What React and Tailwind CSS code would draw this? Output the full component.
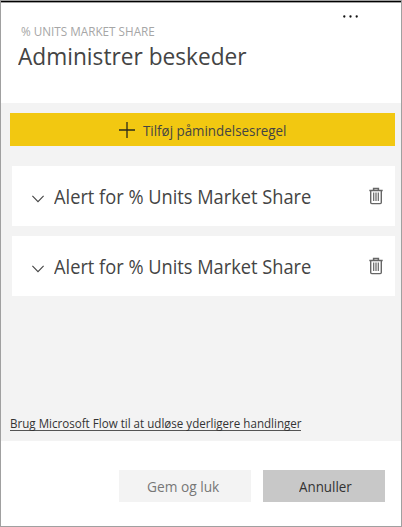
import React from "react";

function Trash() {
  return (
    <svg width="14" height="18" viewBox="0 0 14 18" fill="none" stroke="#666" className="block">
      <path d="M0.3 3.5H13.7M4.6 3.5V1.5H9.4V3.5" strokeWidth="1.5" />
      <path d="M1.7 3.5V15.5Q1.7 16.6 2.8 16.6H11.2Q12.3 16.6 12.3 15.5V3.5" strokeWidth="1.4" />
      <path d="M4.7 5.5V14M7 5.5V14M9.3 5.5V14" strokeWidth="1.2" />
    </svg>
  );
}

function AlertRow() {
  return (
    <div className="flex h-[60px] items-center bg-white pl-5 pr-3">
      <svg width="12" height="8" viewBox="0 0 12 8" fill="none" stroke="#444" strokeWidth="1.1" className="mt-1.5 block">
        <path d="M0.4 0.9L6 6.6L11.6 0.9" />
      </svg>
      <span className="ml-[10px] mt-0.5 w-[258px] origin-left scale-x-[0.912] whitespace-nowrap text-[20px] leading-7 text-[#444]">
        Alert for % Units Market Share
      </span>
      <span className="ml-auto">
        <Trash />
      </span>
    </div>
  );
}

export default function App() {
  return (
    <div className="flex h-[527px] w-[402px] flex-col overflow-hidden border border-t-0 border-[#a0a0a0] bg-white font-['Open_Sans','Noto_Sans',sans-serif]">
      <div className="h-[3px] shrink-0 border-b border-t border-[#a0a0a0] bg-black" />
      <header className="h-[100px] shrink-0 pl-[17px]">
        <div className="flex h-5 justify-end pr-[43px] pt-3">
          <svg width="15" height="3" viewBox="0 0 15 3" fill="#111">
            <circle cx="1.3" cy="1.5" r="1.15" />
            <circle cx="7.5" cy="1.5" r="1.15" />
            <circle cx="13.7" cy="1.5" r="1.15" />
          </svg>
        </div>
        <div className="ml-[3px] w-[135px] origin-left scale-x-[0.937] whitespace-nowrap pt-px text-[12.5px] leading-4 text-[#a6a6a6]">
          % UNITS MARKET SHARE
        </div>
        <h1 className="-mt-1 w-[229px] origin-left scale-x-[0.945] whitespace-nowrap pt-0.5 text-[24px] leading-9 text-[#444]">Administrer beskeder</h1>
      </header>
      <main className="flex h-[338px] shrink-0 flex-col bg-[#f3f3f3] pl-[9px] pr-[6px] pt-[10px]">
        <button className="flex h-[33px] items-center bg-[#f2c811] pl-[109px]">
          <svg width="16" height="16" viewBox="0 0 16 16" stroke="#2a2a1a" strokeWidth="1.3">
            <path d="M0 8H16M8 0V16" />
          </svg>
          <span className="ml-2 mt-0.5 w-[143px] origin-left scale-x-[0.955] whitespace-nowrap text-left text-[14px] leading-5 text-[#444]">
            Tilføj påmindelsesregel
          </span>
        </button>
        <div className="ml-0.5 mt-5 flex flex-col gap-[10px]">
          <AlertRow />
          <AlertRow />
        </div>
        <div className="mb-[10px] mt-auto h-[16px] w-[291px] border-b border-[#555]">
          <a className="block origin-left scale-x-[0.927] whitespace-nowrap pt-px text-[12.5px] leading-4 text-[#333]">
            Brug Microsoft Flow til at udløse yderligere handlinger
          </a>
        </div>
      </main>
      <footer className="flex justify-end gap-3 pr-4 pt-[29px]">
        <button className="flex h-8 w-[132px] items-center bg-[#f3f3f3] pl-7">
          <span className="mt-0.5 w-[73px] origin-left scale-x-[0.98] whitespace-nowrap text-left text-[14px] leading-5 text-[#777]">Gem og luk</span>
        </button>
        <button className="flex h-8 w-[122px] items-center bg-[#c8c8c8] pl-9">
          <span className="mt-0.5 w-[53px] origin-left scale-x-[0.955] whitespace-nowrap text-left text-[14px] leading-5 text-[#333]">Annuller</span>
        </button>
      </footer>
    </div>
  );
}
